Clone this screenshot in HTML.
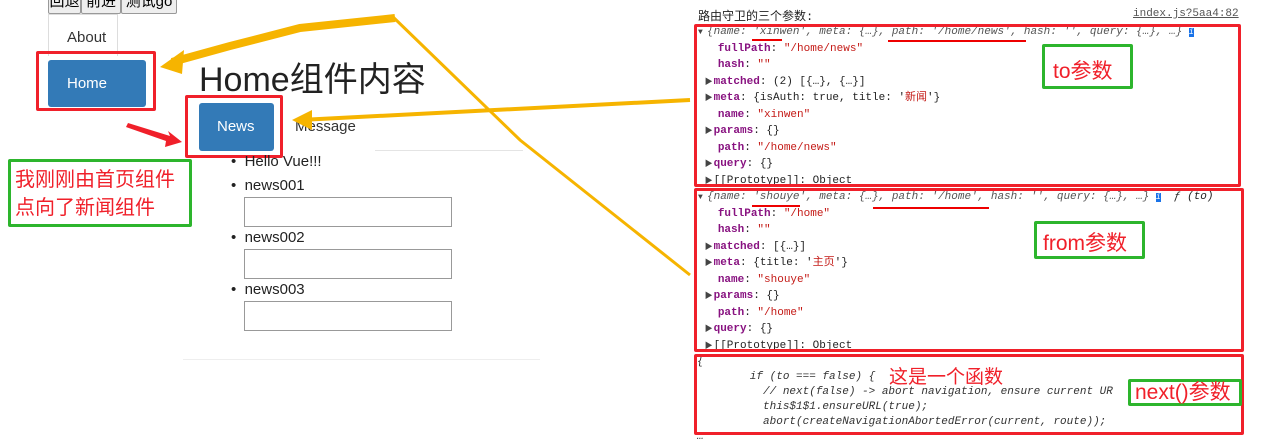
<!DOCTYPE html>
<html><head><meta charset="utf-8"><style>
body{margin:0;width:1267px;height:444px;background:#fff;position:relative;overflow:hidden;font-family:"Liberation Sans","Noto Sans CJK SC",sans-serif;}
.a{position:absolute;white-space:nowrap}
.btn{position:absolute;top:-8px;height:22px;border:1px solid #999;background:#eee;font-size:15px;line-height:18px;text-align:center;box-sizing:border-box;border-radius:2px}
.mono{font-family:"Liberation Mono","Noto Sans CJK SC",monospace;font-size:11px;color:#222}
.mono>div{height:16.5px;line-height:16.5px;overflow:visible}
.k{color:#881280;font-weight:bold}
.s{color:#c41a16}
.g{color:#555;font-style:italic}
.rb{position:absolute;border:3px solid #f0202a;box-sizing:border-box;border-radius:2px}
.gb{position:absolute;border:3px solid #2db52d;box-sizing:border-box;border-radius:2px;color:#f0202a;font-size:21px}
.inp{position:absolute;left:244px;width:208px;height:30px;border:1px solid #999;box-sizing:border-box}
.li{position:absolute;left:231px;font-size:15px;color:#222}
.tri{display:inline-block;width:9px;color:#444;font-size:8px;line-height:10px}
</style></head><body>
<div class="btn" style="left:48px;width:33px">回退</div>
<div class="btn" style="left:81px;width:40px">前进</div>
<div class="btn" style="left:121px;width:56px">测试go</div>
<div class="a" style="left:48px;top:14px;width:70px;height:42px;border:1px solid #ddd;border-bottom:none;box-sizing:border-box"></div>
<div class="a" style="left:67px;top:29px;font-size:15px;color:#333">About</div>
<div class="a" style="left:48px;top:60px;width:98px;height:47px;background:#337ab7;border-radius:3px"></div>
<div class="a" style="left:67px;top:75px;font-size:15px;color:#fff">Home</div>
<div class="rb" style="left:36px;top:51px;width:120px;height:60px"></div>
<div class="a" style="left:199px;top:52px;font-size:34px;color:#222">Home组件内容</div>
<div class="a" style="left:199px;top:103px;width:75px;height:48px;background:#337ab7;border-radius:3px"></div>
<div class="a" style="left:217px;top:118px;font-size:15px;color:#fff">News</div>
<div class="rb" style="left:185px;top:95px;width:98px;height:63px"></div>
<div class="a" style="left:295px;top:118px;font-size:15px;color:#333">Message</div>
<div class="a" style="left:375px;top:150px;width:148px;height:1px;background:#e4e4e4"></div>
<div class="li" style="top:153px">•&nbsp; Hello Vue!!!</div>
<div class="li" style="top:177px">•&nbsp; news001</div>
<div class="inp" style="top:197px"></div>
<div class="li" style="top:229px">•&nbsp; news002</div>
<div class="inp" style="top:249px"></div>
<div class="li" style="top:281px">•&nbsp; news003</div>
<div class="inp" style="top:301px"></div>
<div class="a" style="left:183px;top:359px;width:357px;height:1px;background:#eee"></div>
<div class="gb" style="left:8px;top:159px;width:184px;height:68px;padding:4px 0 0 4px;line-height:28px;font-size:20px">我刚刚由首页组件<br>点向了新闻组件</div>
<svg class="a" style="left:0;top:0" width="700" height="300">
<polygon points="128,123 170,136 168,131 182,142 165,147 166,141 126,127" fill="#f0202a"/>
<path d="M395,18 L300,28 L230,46 L172,62" stroke="#f6b400" stroke-width="8" fill="none"/>
<polygon points="160,67 184,50 182,74" fill="#f6b400"/>
<path d="M392,16 L520,140 L690,275" stroke="#f6b400" stroke-width="3" fill="none"/>
<path d="M690,100 L300,120" stroke="#f6b400" stroke-width="4" fill="none"/>
<polygon points="292,120 312,110 312,130" fill="#f6b400"/>
</svg>
<div class="a" style="left:698px;top:7px;font-size:12px;color:#222;font-family:'Liberation Mono','Noto Sans CJK SC',monospace">路由守卫的三个参数:</div>
<div class="a mono" style="left:1133px;top:8px;color:#555;text-decoration:underline">index.js?5aa4:82</div>
<div class="a mono" style="left:698px;top:24px">
<div class="g"><span class="tri">▼</span>{name: 'xinwen', meta: {…}, path: '/home/news', hash: '', query: {…}, …} <span style="background:#1a73e8;color:#fff;font-size:8px">i</span></div>
<div>&nbsp;&nbsp; <span class="k">fullPath</span>: <span class="s">"/home/news"</span></div>
<div>&nbsp;&nbsp; <span class="k">hash</span>: <span class="s">""</span></div>
<div>&nbsp;<span class="tri">▶</span><span class="k">matched</span>: (2) [{…}, {…}]</div>
<div>&nbsp;<span class="tri">▶</span><span class="k">meta</span>: {isAuth: true, title: '<span class="s">新闻</span>'}</div>
<div>&nbsp;&nbsp; <span class="k">name</span>: <span class="s">"xinwen"</span></div>
<div>&nbsp;<span class="tri">▶</span><span class="k">params</span>: {}</div>
<div>&nbsp;&nbsp; <span class="k">path</span>: <span class="s">"/home/news"</span></div>
<div>&nbsp;<span class="tri">▶</span><span class="k">query</span>: {}</div>
<div>&nbsp;<span class="tri">▶</span>[[Prototype]]: Object</div>
</div>
<div class="a mono" style="left:698px;top:189px">
<div class="g"><span class="tri">▼</span>{name: 'shouye', meta: {…}, path: '/home', hash: '', query: {…}, …} <span style="background:#1a73e8;color:#fff;font-size:8px">i</span>&nbsp; <span style="font-style:italic;color:#222">ƒ (to)</span></div>
<div>&nbsp;&nbsp; <span class="k">fullPath</span>: <span class="s">"/home"</span></div>
<div>&nbsp;&nbsp; <span class="k">hash</span>: <span class="s">""</span></div>
<div>&nbsp;<span class="tri">▶</span><span class="k">matched</span>: [{…}]</div>
<div>&nbsp;<span class="tri">▶</span><span class="k">meta</span>: {title: '<span class="s">主页</span>'}</div>
<div>&nbsp;&nbsp; <span class="k">name</span>: <span class="s">"shouye"</span></div>
<div>&nbsp;<span class="tri">▶</span><span class="k">params</span>: {}</div>
<div>&nbsp;&nbsp; <span class="k">path</span>: <span class="s">"/home"</span></div>
<div>&nbsp;<span class="tri">▶</span><span class="k">query</span>: {}</div>
<div>&nbsp;<span class="tri">▶</span>[[Prototype]]: Object</div>
</div>
<div class="a mono" style="left:697px;top:355px;line-height:15px;font-style:italic;color:#333">{<br>&nbsp;&nbsp;&nbsp;&nbsp;&nbsp;&nbsp;&nbsp;&nbsp;if (to === false) {<br>&nbsp;&nbsp;&nbsp;&nbsp;&nbsp;&nbsp;&nbsp;&nbsp;&nbsp;&nbsp;// next(false) -&gt; abort navigation, ensure current UR<br>&nbsp;&nbsp;&nbsp;&nbsp;&nbsp;&nbsp;&nbsp;&nbsp;&nbsp;&nbsp;this$1$1.ensureURL(true);<br>&nbsp;&nbsp;&nbsp;&nbsp;&nbsp;&nbsp;&nbsp;&nbsp;&nbsp;&nbsp;abort(createNavigationAbortedError(current, route));<br>…</div>
<div class="a" style="left:889px;top:362px;font-size:19px;color:#f0202a">这是一个函数</div>
<div class="a" style="left:752px;top:39px;width:30px;height:2px;background:#e00"></div>
<div class="a" style="left:888px;top:40px;width:138px;height:2px;background:#e00"></div>
<div class="a" style="left:752px;top:205px;width:48px;height:2px;background:#e00"></div>
<div class="a" style="left:873px;top:207px;width:116px;height:2px;background:#e00"></div>
<div class="rb" style="left:694px;top:24px;width:547px;height:163px"></div>
<div class="rb" style="left:694px;top:188px;width:550px;height:164px"></div>
<div class="rb" style="left:694px;top:354px;width:550px;height:81px"></div>
<div class="gb" style="left:1042px;top:44px;width:91px;height:45px;padding:8px 0 0 8px;background:#fff">to参数</div>
<div class="gb" style="left:1034px;top:221px;width:111px;height:38px;padding:3px 0 0 6px;background:#fff">from参数</div>
<div class="gb" style="left:1128px;top:379px;width:114px;height:27px;padding:0 0 0 4px;line-height:22px;background:#fff">next()参数</div>
</body></html>
